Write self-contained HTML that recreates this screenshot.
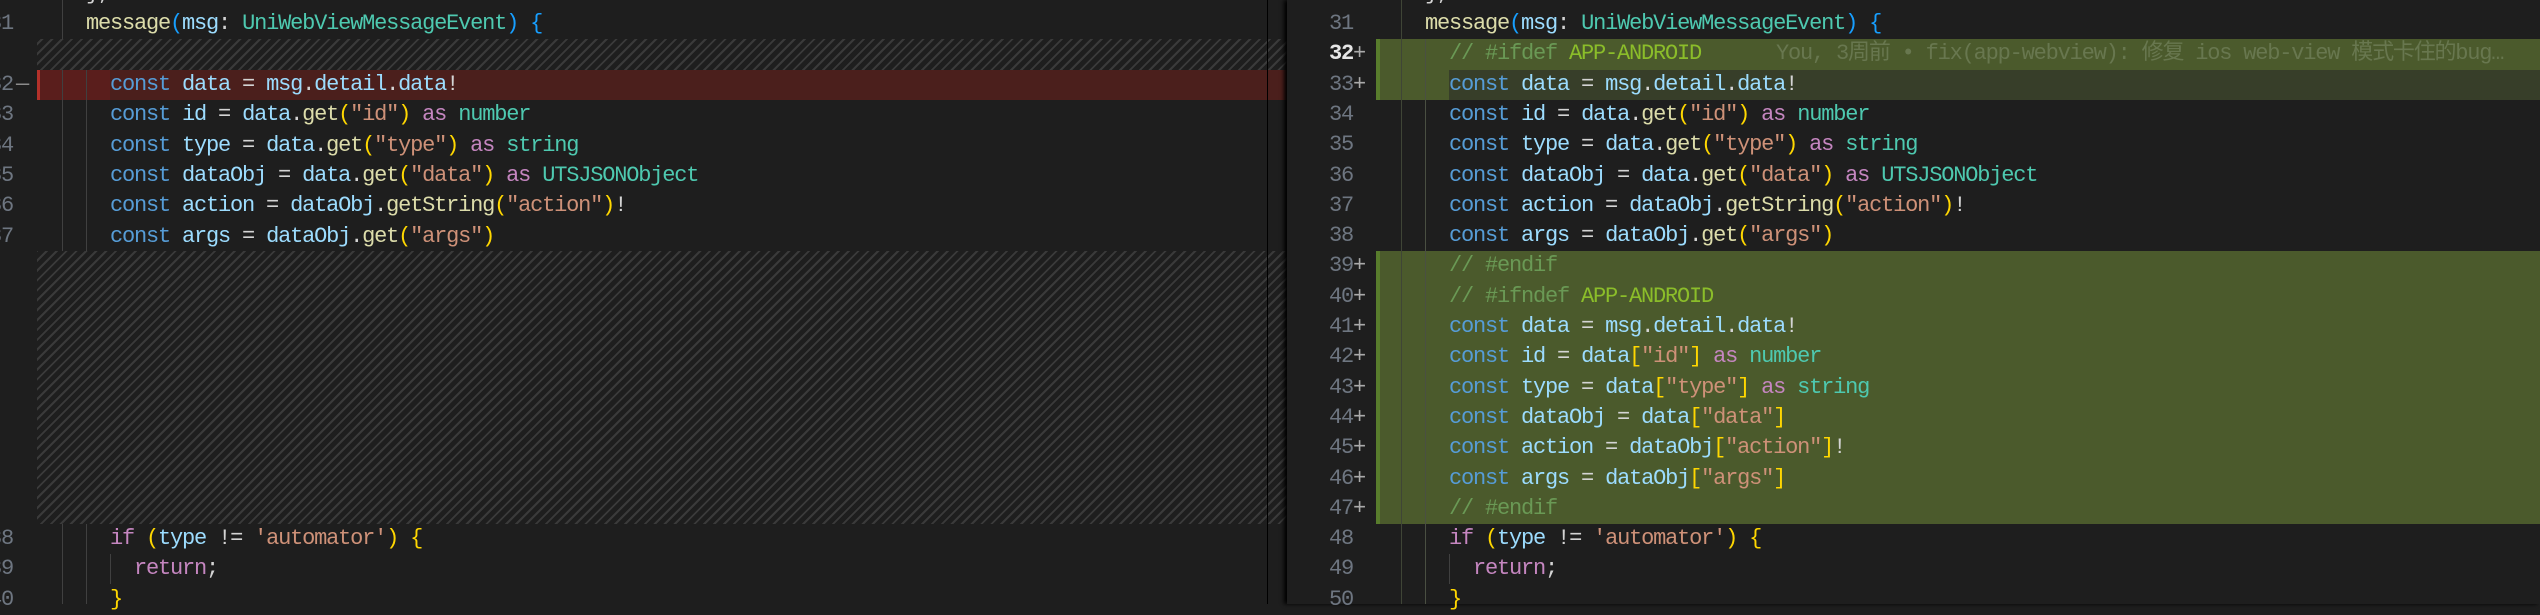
<!DOCTYPE html>
<html><head><meta charset="utf-8"><style>
*{margin:0;padding:0;box-sizing:border-box}
body{width:2540px;height:604px;background:#1e1e1e;overflow:hidden;position:relative;font-family:"Liberation Mono","Noto Sans CJK SC",monospace;font-size:22px;letter-spacing:-1.2px;color:#d4d4d4}
.l{position:absolute;height:30.3px;line-height:30.3px;white-space:pre}
.n{position:absolute;height:30.3px;line-height:30.3px;color:#6e7681;text-align:right;width:60px}
.hatch{position:absolute;background:repeating-linear-gradient(-45deg,#1e1e1e 0 5px,#3a3a3a 5px 7px)}
.g{position:absolute;width:1px;background:#404040}
.k{color:#569cd6}.v{color:#9cdcfe}.f{color:#dcdcaa}.t{color:#4ec9b0}.s{color:#ce9178}.c{color:#c586c0}.y{color:#ffd700}.b{color:#179fff}.cm{color:#6a9955}.ap{color:#8bbd2a}.w{color:#d4d4d4}
</style></head><body>
<!-- LEFT PANE -->
<div class="hatch" style="left:37px;top:39px;width:1250px;height:31px"></div>
<div class="hatch" style="left:37px;top:251px;width:1250px;height:273px"></div>
<div style="position:absolute;left:37px;top:70px;width:1250px;height:30.3px;background:#4b1f1c"></div>
<div style="position:absolute;left:37px;top:70px;width:73px;height:30.3px;background:#5a1e1c"></div>
<div style="position:absolute;left:37px;top:70px;width:3px;height:30.3px;background:#b3312a"></div>
<div class="g" style="left:62px;top:0;height:39px"></div>
<div class="g" style="left:62px;top:70px;height:181px"></div>
<div class="g" style="left:62px;top:524px;height:80px"></div>
<div class="g" style="left:86px;top:70px;height:181px"></div>
<div class="g" style="left:86px;top:524px;height:80px"></div>
<div class="g" style="left:110px;top:554px;height:30px"></div>
<div class="n" style="left:-47px;top:-21px">30</div>
<div class="n" style="left:-47px;top:9px">31</div>
<div class="n" style="left:-47px;top:70px">32</div><div class="l" style="left:16px;top:70px;color:#8b8b8b">—</div>
<div class="n" style="left:-47px;top:100.3px">33</div>
<div class="n" style="left:-47px;top:130.6px">34</div>
<div class="n" style="left:-47px;top:160.9px">35</div>
<div class="n" style="left:-47px;top:191.2px">36</div>
<div class="n" style="left:-47px;top:221.5px">37</div>
<div class="n" style="left:-47px;top:524px">38</div>
<div class="n" style="left:-47px;top:554.3px">39</div>
<div class="n" style="left:-47px;top:584.6px">40</div>
<div class="l" style="left:86px;top:-21px">},</div>
<div class="l" style="left:86px;top:9px"><span class="f">message</span><span class="b">(</span><span class="v">msg</span>: <span class="t">UniWebViewMessageEvent</span><span class="b">)</span> <span class="b">{</span></div>
<div class="l" style="left:110px;top:70px"><span class="k">const</span> <span class="v">data</span> = <span class="v">msg</span>.<span class="v">detail</span>.<span class="v">data</span>!</div>
<div class="l" style="left:110px;top:100.3px"><span class="k">const</span> <span class="v">id</span> = <span class="v">data</span>.<span class="f">get</span><span class="y">(</span><span class="s">"id"</span><span class="y">)</span> <span class="c">as</span> <span class="t">number</span></div>
<div class="l" style="left:110px;top:130.6px"><span class="k">const</span> <span class="v">type</span> = <span class="v">data</span>.<span class="f">get</span><span class="y">(</span><span class="s">"type"</span><span class="y">)</span> <span class="c">as</span> <span class="t">string</span></div>
<div class="l" style="left:110px;top:160.9px"><span class="k">const</span> <span class="v">dataObj</span> = <span class="v">data</span>.<span class="f">get</span><span class="y">(</span><span class="s">"data"</span><span class="y">)</span> <span class="c">as</span> <span class="t">UTSJSONObject</span></div>
<div class="l" style="left:110px;top:191.2px"><span class="k">const</span> <span class="v">action</span> = <span class="v">dataObj</span>.<span class="f">getString</span><span class="y">(</span><span class="s">"action"</span><span class="y">)</span>!</div>
<div class="l" style="left:110px;top:221.5px"><span class="k">const</span> <span class="v">args</span> = <span class="v">dataObj</span>.<span class="f">get</span><span class="y">(</span><span class="s">"args"</span><span class="y">)</span></div>
<div class="l" style="left:110px;top:524px"><span class="c">if</span> <span class="y">(</span><span class="v">type</span> != <span class="s">'automator'</span><span class="y">)</span> <span class="y">{</span></div>
<div class="l" style="left:134px;top:554.3px"><span class="c">return</span>;</div>
<div class="l" style="left:110px;top:584.6px"><span class="y">}</span></div>
<div style="position:absolute;left:1267px;top:0;width:1px;height:604px;background:#000"></div>
<!-- RIGHT PANE -->
<div style="position:absolute;left:1287px;top:0;width:1253px;height:604px;background:#1e1e1e;box-shadow:-3px 0 4px #000"></div>
<div style="position:absolute;left:1377px;top:39.3px;width:1163px;height:30.3px;background:#4b5a2c"></div>
<div style="position:absolute;left:1377px;top:69.6px;width:1163px;height:30.3px;background:#4b5a2c"></div>
<div style="position:absolute;left:1449px;top:69.6px;width:1091px;height:30.3px;background:#373e29"></div>
<div style="position:absolute;left:1377px;top:251.1px;width:1163px;height:272.7px;background:#4b5a2c"></div>
<div style="position:absolute;left:1376px;top:39.3px;width:4px;height:60.6px;background:#587c2c"></div>
<div style="position:absolute;left:1376px;top:251.1px;width:4px;height:272.7px;background:#587c2c"></div>
<div class="g" style="left:1401px;top:0;height:604px;background:#3f4536"></div>
<div class="g" style="left:1425px;top:39px;height:565px;background:#4a4f42"></div>
<div class="g" style="left:1449px;top:554px;height:30px"></div>
<div class="n" style="left:1293px;top:-21px">30</div>
<div class="n" style="left:1293px;top:9px">31</div>
<div class="n" style="left:1293px;top:39.3px;color:#e6e6e6;font-weight:bold">32</div>
<div class="n" style="left:1293px;top:69.6px">33</div>
<div class="n" style="left:1293px;top:99.9px">34</div>
<div class="n" style="left:1293px;top:130.2px">35</div>
<div class="n" style="left:1293px;top:160.5px">36</div>
<div class="n" style="left:1293px;top:190.8px">37</div>
<div class="n" style="left:1293px;top:221.1px">38</div>
<div class="n" style="left:1293px;top:251.4px">39</div>
<div class="n" style="left:1293px;top:281.7px">40</div>
<div class="n" style="left:1293px;top:312px">41</div>
<div class="n" style="left:1293px;top:342.3px">42</div>
<div class="n" style="left:1293px;top:372.6px">43</div>
<div class="n" style="left:1293px;top:402.9px">44</div>
<div class="n" style="left:1293px;top:433.2px">45</div>
<div class="n" style="left:1293px;top:463.5px">46</div>
<div class="n" style="left:1293px;top:493.8px">47</div>
<div class="n" style="left:1293px;top:524.1px">48</div>
<div class="n" style="left:1293px;top:554.4px">49</div>
<div class="n" style="left:1293px;top:584.7px">50</div>
<div class="l" style="left:1353px;top:39.3px;color:#aaa">+</div>
<div class="l" style="left:1353px;top:69.6px;color:#aaa">+</div>
<div class="l" style="left:1353px;top:251.4px;color:#aaa">+</div>
<div class="l" style="left:1353px;top:281.7px;color:#aaa">+</div>
<div class="l" style="left:1353px;top:312px;color:#aaa">+</div>
<div class="l" style="left:1353px;top:342.3px;color:#aaa">+</div>
<div class="l" style="left:1353px;top:372.6px;color:#aaa">+</div>
<div class="l" style="left:1353px;top:402.9px;color:#aaa">+</div>
<div class="l" style="left:1353px;top:433.2px;color:#aaa">+</div>
<div class="l" style="left:1353px;top:463.5px;color:#aaa">+</div>
<div class="l" style="left:1353px;top:493.8px;color:#aaa">+</div>
<div class="l" style="left:1425px;top:-21px">},</div>
<div class="l" style="left:1425px;top:9px"><span class="f">message</span><span class="b">(</span><span class="v">msg</span>: <span class="t">UniWebViewMessageEvent</span><span class="b">)</span> <span class="b">{</span></div>
<div class="l" style="left:1449px;top:39.3px"><span class="cm">// #ifdef </span><span class="ap">APP-ANDROID</span></div>
<div class="l" style="left:1776px;top:39.3px;color:#68774f">You, 3周前 • fix(app-webview): 修复 ios web-view 模式卡住的bug…</div>
<div class="l" style="left:1449px;top:69.6px"><span class="k">const</span> <span class="v">data</span> = <span class="v">msg</span>.<span class="v">detail</span>.<span class="v">data</span>!</div>
<div class="l" style="left:1449px;top:99.9px"><span class="k">const</span> <span class="v">id</span> = <span class="v">data</span>.<span class="f">get</span><span class="y">(</span><span class="s">"id"</span><span class="y">)</span> <span class="c">as</span> <span class="t">number</span></div>
<div class="l" style="left:1449px;top:130.2px"><span class="k">const</span> <span class="v">type</span> = <span class="v">data</span>.<span class="f">get</span><span class="y">(</span><span class="s">"type"</span><span class="y">)</span> <span class="c">as</span> <span class="t">string</span></div>
<div class="l" style="left:1449px;top:160.5px"><span class="k">const</span> <span class="v">dataObj</span> = <span class="v">data</span>.<span class="f">get</span><span class="y">(</span><span class="s">"data"</span><span class="y">)</span> <span class="c">as</span> <span class="t">UTSJSONObject</span></div>
<div class="l" style="left:1449px;top:190.8px"><span class="k">const</span> <span class="v">action</span> = <span class="v">dataObj</span>.<span class="f">getString</span><span class="y">(</span><span class="s">"action"</span><span class="y">)</span>!</div>
<div class="l" style="left:1449px;top:221.1px"><span class="k">const</span> <span class="v">args</span> = <span class="v">dataObj</span>.<span class="f">get</span><span class="y">(</span><span class="s">"args"</span><span class="y">)</span></div>
<div class="l" style="left:1449px;top:251.4px"><span class="cm">// #endif</span></div>
<div class="l" style="left:1449px;top:281.7px"><span class="cm">// #ifndef </span><span class="ap">APP-ANDROID</span></div>
<div class="l" style="left:1449px;top:312px"><span class="k">const</span> <span class="v">data</span> = <span class="v">msg</span>.<span class="v">detail</span>.<span class="v">data</span>!</div>
<div class="l" style="left:1449px;top:342.3px"><span class="k">const</span> <span class="v">id</span> = <span class="v">data</span><span class="y">[</span><span class="s">"id"</span><span class="y">]</span> <span class="c">as</span> <span class="t">number</span></div>
<div class="l" style="left:1449px;top:372.6px"><span class="k">const</span> <span class="v">type</span> = <span class="v">data</span><span class="y">[</span><span class="s">"type"</span><span class="y">]</span> <span class="c">as</span> <span class="t">string</span></div>
<div class="l" style="left:1449px;top:402.9px"><span class="k">const</span> <span class="v">dataObj</span> = <span class="v">data</span><span class="y">[</span><span class="s">"data"</span><span class="y">]</span></div>
<div class="l" style="left:1449px;top:433.2px"><span class="k">const</span> <span class="v">action</span> = <span class="v">dataObj</span><span class="y">[</span><span class="s">"action"</span><span class="y">]</span>!</div>
<div class="l" style="left:1449px;top:463.5px"><span class="k">const</span> <span class="v">args</span> = <span class="v">dataObj</span><span class="y">[</span><span class="s">"args"</span><span class="y">]</span></div>
<div class="l" style="left:1449px;top:493.8px"><span class="cm">// #endif</span></div>
<div class="l" style="left:1449px;top:524.1px"><span class="c">if</span> <span class="y">(</span><span class="v">type</span> != <span class="s">'automator'</span><span class="y">)</span> <span class="y">{</span></div>
<div class="l" style="left:1473px;top:554.4px"><span class="c">return</span>;</div>
<div class="l" style="left:1449px;top:584.7px"><span class="y">}</span></div>
</body></html>
